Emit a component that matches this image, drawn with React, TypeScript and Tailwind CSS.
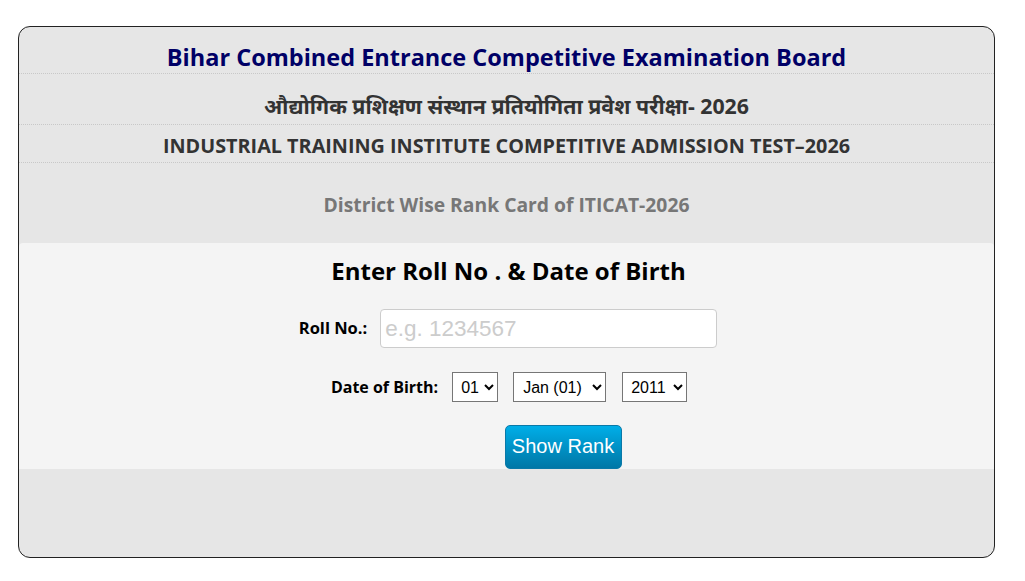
import { useState } from "react";

export default function App() {
    const [roll, setRoll] = useState("");
    const [day, setDay] = useState("01");
    const [month, setMonth] = useState("01");
    const [year, setYear] = useState("2011");

    const days = Array.from({ length: 31 }, (_, i) => String(i + 1).padStart(2, "0"));
    const months = ["Jan", "Feb", "Mar", "Apr", "May", "Jun", "Jul", "Aug", "Sep", "Oct", "Nov", "Dec"];
    const years = ["2008", "2009", "2010", "2011", "2012"];

    return (
        <div className="min-h-[581px] bg-white pt-[26px] pl-[18px] font-['Open_Sans',sans-serif]">
            <div className="w-[977px] h-[532px] bg-[#e6e6e6] border border-[#222] rounded-[12px] overflow-hidden flex flex-col">
                {/* Header rows */}
                <div className="h-[47px] flex items-center justify-center border-b border-dotted border-[#c8c8c8]">
                    <h1 className="text-[23.5px] font-bold text-[#000066] pt-[16px]">
                        Bihar Combined Entrance Competitive Examination Board
                    </h1>
                </div>
                <div className="h-[51px] flex items-center justify-center border-b border-dotted border-[#c8c8c8]">
                    <h2 className="text-[21.3px] font-bold text-[#333] font-['Noto_Sans','Noto_Sans_Devanagari',sans-serif] pt-[14px]">
                        औद्योगिक प्रशिक्षण संस्थान प्रतियोगिता प्रवेश परीक्षा- 2026
                    </h2>
                </div>
                <div className="h-[38px] flex items-center justify-center border-b border-dotted border-[#c8c8c8]">
                    <h3 className="text-[19.8px] font-bold text-[#333] pt-[4px]">
                        INDUSTRIAL TRAINING INSTITUTE COMPETITIVE ADMISSION TEST–2026
                    </h3>
                </div>
                <div className="h-[80px] flex items-center justify-center">
                    <h4 className="text-[19.3px] font-bold text-[#777] pt-[4px]">
                        District Wise Rank Card of ITICAT-2026
                    </h4>
                </div>

                {/* Form */}
                <form
                    onSubmit={(e) => e.preventDefault()}
                    className="h-[226px] bg-[#f4f4f4] rounded-t-[4px] flex flex-col items-center"
                >
                    <h2 className="mt-[11px] text-[24px] font-bold text-black leading-[34px] pl-[4px]">
                        Enter Roll No . &amp; Date of Birth
                    </h2>
                    <div className="mt-[21px] flex items-center gap-[13px] pl-[3px]">
                        <label className="text-[16.5px] font-bold text-black">Roll No.:</label>
                        <input
                            type="text"
                            value={roll}
                            onChange={(e) => setRoll(e.target.value)}
                            placeholder="e.g. 1234567"
                            className="w-[337px] h-[39px] bg-white border border-[#ccc] rounded-[4px] px-[4px] text-[22.5px] font-['Liberation_Sans',Arial,sans-serif] placeholder-[#ccc] focus:outline-none"
                        />
                    </div>
                    <div className="mt-[24px] flex items-center pl-[5px]">
                        <label className="text-[16px] font-bold text-black mr-[14px]">Date of Birth:</label>
                        <select
                            value={day}
                            onChange={(e) => setDay(e.target.value)}
                            className="h-[30px] w-[46px] bg-white border border-[#767676] text-[16px] font-['Liberation_Sans',Arial,sans-serif] text-black pl-[4px] mr-[15px]"
                        >
                            {days.map((d) => (
                                <option key={d} value={d}>{d}</option>
                            ))}
                        </select>
                        <select
                            value={month}
                            onChange={(e) => setMonth(e.target.value)}
                            className="h-[30px] w-[93px] bg-white border border-[#767676] text-[16px] font-['Liberation_Sans',Arial,sans-serif] text-black pl-[5px] mr-[16px]"
                        >
                            {months.map((m, i) => {
                                const v = String(i + 1).padStart(2, "0");
                                return (
                                    <option key={v} value={v}>{m} ({v})</option>
                                );
                            })}
                        </select>
                        <select
                            value={year}
                            onChange={(e) => setYear(e.target.value)}
                            className="h-[30px] w-[65px] bg-white border border-[#767676] text-[16px] font-['Liberation_Sans',Arial,sans-serif] text-black pl-[4px]"
                        >
                            {years.map((y) => (
                                <option key={y} value={y}>{y}</option>
                            ))}
                        </select>
                    </div>
                    <div className="mt-[23px] pl-[113px]">
                        <button
                            type="submit"
                            className="w-[117px] h-[44px] rounded-[5px] border border-[#0a79a8] bg-gradient-to-b from-[#00aee8] to-[#0077a6] text-white text-[20px] font-['Liberation_Sans',Arial,sans-serif] pb-[2px]"
                        >
                            Show Rank
                        </button>
                    </div>
                </form>
            </div>
        </div>
    );
}
